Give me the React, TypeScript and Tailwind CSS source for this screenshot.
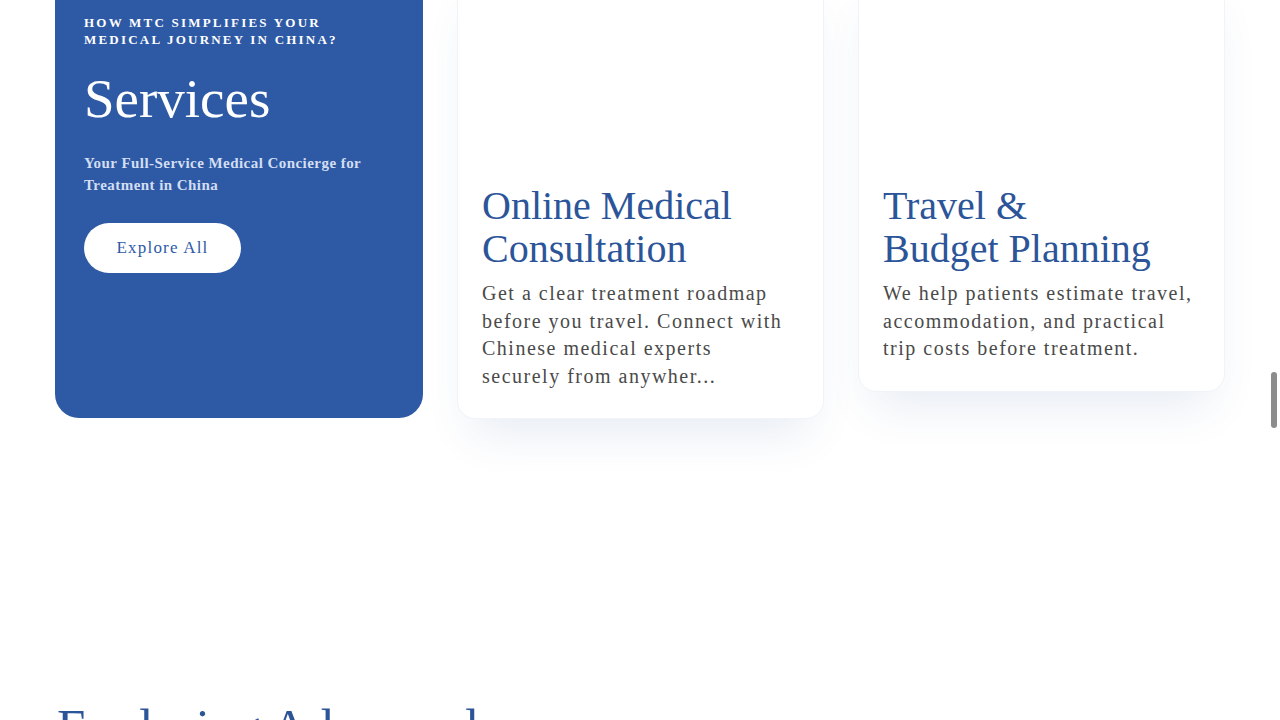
import React from "react";

type Service = {
  title: string[];
  text: string;
};

const services: Service[] = [
  {
    title: ["Online Medical", "Consultation"],
    text: "Get a clear treatment roadmap before you travel. Connect with Chinese medical experts securely from anywher...",
  },
  {
    title: ["Travel &", "Budget Planning"],
    text: "We help patients estimate travel, accommodation, and practical trip costs before treatment.",
  },
];

const serif = { fontFamily: '"Liberation Serif", "Times New Roman", serif' };

function IntroCard() {
  return (
    <div className="w-[368px] h-[448px] shrink-0 rounded-b-[24px] bg-[#2e5aa5] pt-[44px] px-[29px]">
      <p className="text-[13px] leading-[17px] font-bold uppercase tracking-[0.17em] text-white">
        How MTC simplifies your
        <br />
        medical journey in China?
      </p>
      <h2 className="mt-[21px] text-[55px] leading-[59px] text-white">Services</h2>
      <p className="mt-[24px] text-[15px] leading-[22px] font-bold tracking-[0.03em] text-[#d3def2]">
        Your Full-Service Medical Concierge for
        <br />
        Treatment in China
      </p>
      <button className="mt-[27px] h-[50px] w-[157px] rounded-full bg-white text-[17px] tracking-[0.07em] text-[#2e5aa5]">
        Explore All
      </button>
    </div>
  );
}

function ServiceCard({ service }: { service: Service }) {
  return (
    <div className="w-[367px] shrink-0 overflow-hidden rounded-[18px] border border-[#f0f3f8] bg-white shadow-[0_28px_48px_-16px_rgba(40,80,150,0.12)]">
      <div className="h-[190px] bg-white" />
      <div className="pl-[24px] pr-[30px] pt-[23px] pb-[28px]">
        <h3 className="text-[40px] leading-[43px] text-[#2c5599]">
          {service.title[0]}
          <br />
          {service.title[1]}
        </h3>
        <p className="mt-[10px] text-[20px] leading-[27.5px] tracking-[0.075em] text-[#4a4a4a]">
          {service.text}
        </p>
      </div>
    </div>
  );
}

export default function App() {
  return (
    <div className="relative h-[720px] overflow-hidden bg-white" style={serif}>
      <section className="-mt-[30px] pl-[55px]">
        <div className="flex items-start gap-[34px]">
          <IntroCard />
          {services.map((s) => (
            <ServiceCard key={s.title.join(" ")} service={s} />
          ))}
        </div>
        <h2 className="mt-[278px] pl-[2px] text-[51px] leading-[60px] text-[#2c5599]">
          Exploring Advanced
        </h2>
      </section>
      {/* overlay scrollbar */}
      <div className="absolute right-[3px] top-[372px] h-[56px] w-[6px] rounded-full bg-[#8c8c8c]" />
    </div>
  );
}
